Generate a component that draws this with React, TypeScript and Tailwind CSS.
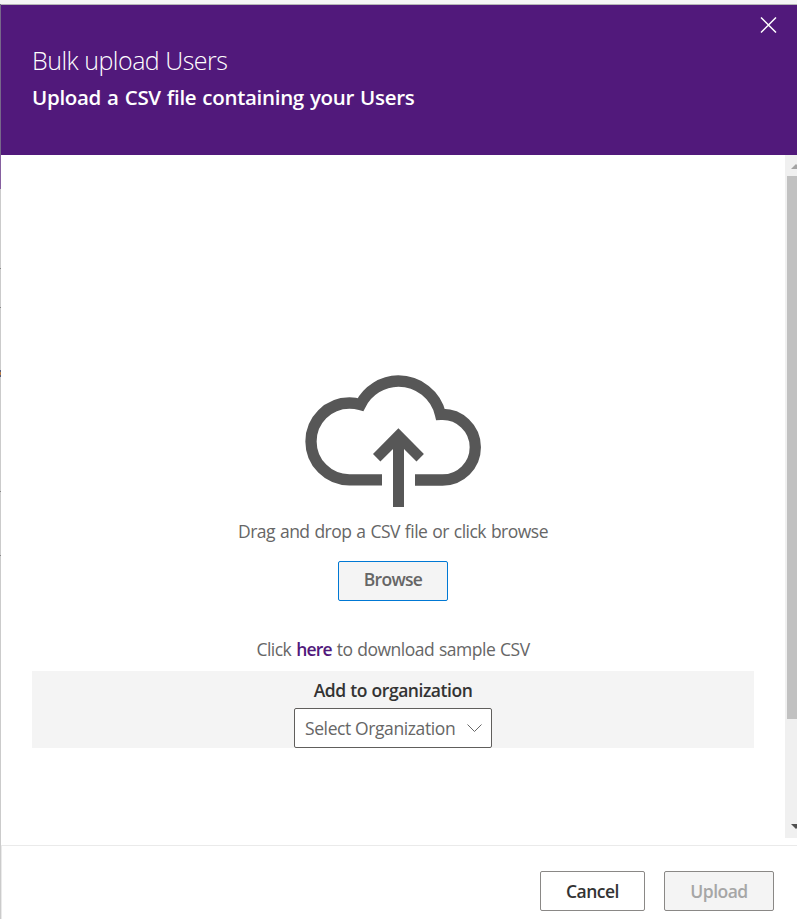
function UploadCloud() {
  return (
    <svg className="block h-[142px] w-[186px]" viewBox="0 0 186 142" fill="none">
      <path
        d="M82 109.8H49.4A38.4 38.4 0 0 1 49.4 33A38.4 38.4 0 0 1 60.5 34.6A43.3 43.3 0 0 1 98.3 11A43.3 43.3 0 0 1 140.5 44.4A32.8 32.8 0 0 1 175.3 77.2A32.8 32.8 0 0 1 142.5 110H115"
        stroke="#575757"
        strokeWidth="11.3"
        strokeMiterlimit="10"
      />
      <path d="M98.4 58.3L123.9 84L116.5 91.4L104 79V137H93V79L80.4 91.4L73 84Z" fill="#575757" />
    </svg>
  );
}

function Scrollbar() {
  return (
    <div className="flex h-[683px] w-[12px] shrink-0 flex-col overflow-hidden bg-[#f0f0f0] pl-[2px]">
      <svg className="h-[21px] w-[10px] shrink-0" viewBox="0 0 10 21">
        <path d="M4 14L9 9L14 14Z" fill="#a3a3a3" />
      </svg>
      <div className="h-[543px] w-[10px] shrink-0 bg-[#c1c1c1]" />
      <div className="grow" />
      <svg className="h-[21px] w-[10px] shrink-0" viewBox="0 0 10 21">
        <path d="M4 7L14 7L9 12Z" fill="#505050" />
      </svg>
    </div>
  );
}

export default function App() {
  return (
    <div className="flex h-[919px] w-[797px] flex-col overflow-hidden bg-[#f5f5f5] pt-[4px] font-['Open_Sans','Noto_Sans',sans-serif]">
      <div className="flex h-[915px]">
        <div className="flex w-px shrink-0 flex-col bg-[#cbcbcb]">
          <div className="h-[151px] bg-[#77678a]" />
          <div className="h-[34px] bg-[#8660a0]" />
          <div className="mt-[79px] h-px bg-[#888888]" />
          <div className="mt-[38px] h-px bg-[#888888]" />
          <div className="mt-[62px] h-[2px] bg-[#585b78]" />
          <div className="h-[3px] bg-[#b57b45]" />
          <div className="h-[2px] bg-[#585b78]" />
          <div className="mt-[114px] h-px bg-[#888888]" />
          <div className="mt-[63px] h-px bg-[#888888]" />
        </div>
        <div className="flex w-[796px] flex-col bg-white">
          <header className="flex h-[151px] shrink-0 justify-between border-t border-[#b5b5b5] bg-[#51197b] pl-[31px] text-white">
            <div className="pt-[38px]">
              <h1 className="h-[37px] whitespace-nowrap text-[25px] font-light leading-[34px] tracking-[-0.5px]">Bulk upload Users</h1>
              <h2 className="whitespace-nowrap text-[20.5px] font-[580] leading-[34px] tracking-[-0.3px] [word-spacing:1px]">Upload a CSV file containing your Users</h2>
            </div>
            <svg className="mr-[20px] mt-[12px] h-[16px] w-[17px]" viewBox="0 0 17 16">
              <path d="M1 0.5L16 15.5M16 0.5L1 15.5" stroke="white" strokeWidth="1.5" />
            </svg>
          </header>
          <div className="flex h-[690px] shrink-0">
            <main className="flex w-[784px] flex-col items-center pt-[215px] text-[17.5px] text-[#666666]">
              <UploadCloud />
              <p className="mt-[7px] h-[24px] whitespace-nowrap leading-[24px] tracking-[-0.5px] [word-spacing:0.8px]">Drag and drop a CSV file or click browse</p>
              <button className="mt-[18px] h-[40px] w-[110px] rounded-[2px] border border-[#0078d4] bg-[#f4f4f4] pb-[4px] text-[17.5px] font-[550] leading-[24px] tracking-[-0.7px]">Browse</button>
              <p className="mt-[36px] h-[24px] whitespace-nowrap leading-[24px] tracking-[-0.5px] [word-spacing:0.8px]">
                Click <a className="font-[550] tracking-[-0.8px] text-[#51197b]">here</a> to download sample CSV
              </p>
              <section className="mt-[10px] flex h-[77px] w-[722px] flex-col items-center bg-[#f4f4f4]">
                <label className="mt-[7px] h-[24px] whitespace-nowrap text-[17.5px] font-[560] leading-[24px] tracking-[-0.45px] text-[#333333] [word-spacing:0.5px]">Add to organization</label>
                <div className="mt-[6px] flex h-[40px] w-[198px] shrink-0 items-center justify-between rounded-[2px] border border-[#605e5c] bg-white pl-[10px] pr-[9px]">
                  <span className="whitespace-nowrap leading-[24px] tracking-[-0.4px]">Select Organization</span>
                  <svg className="h-[9px] w-[15px]" viewBox="0 0 15 9" fill="none">
                    <path d="M0.5 0.5L7.5 7.5L14.5 0.5" stroke="#666666" />
                  </svg>
                </div>
              </section>
            </main>
            <Scrollbar />
          </div>
          <footer className="flex h-[74px] shrink-0 justify-end gap-[19px] border-l border-t border-[#eaeaea] pr-[23px] pt-[25px] text-[17.5px] font-[550] tracking-[-0.5px]">
            <button className="h-[40px] w-[105px] rounded-[2px] border border-[#8a8886] bg-white text-[#333333]">Cancel</button>
            <button className="h-[40px] w-[110px] rounded-[2px] border border-[#8a8886] bg-[#f4f4f4] text-[#a6a6a6]">Upload</button>
          </footer>
        </div>
      </div>
    </div>
  );
}
